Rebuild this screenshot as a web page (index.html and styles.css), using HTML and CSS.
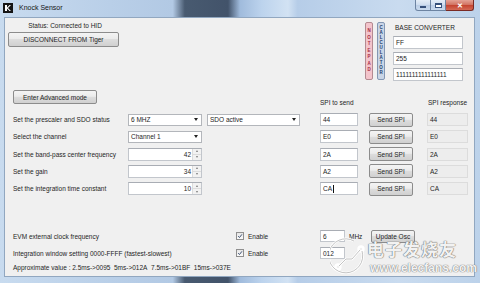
FILE: index.html
```html
<!DOCTYPE html>
<html lang="en">
<head>
    <meta charset="UTF-8">
    <meta name="viewport" content="width=device-width, initial-scale=1.0">
    <title>Knock Sensor</title>
    <link rel="stylesheet" href="styles.css">
</head>
<body>
    <div class="window">
        <div class="titlebar">
            <svg class="app-icon" viewBox="0 0 10 10">
                <rect width="10" height="10" fill="#151515"/>
                <path d="M2 2h2v2.5l2.5-2.5h1.5l-3 3 3 3h-1.5l-2.5-2.5v2.5h-2z" fill="#fff"/>
            </svg>
            <span class="title">Knock Sensor</span>
            <div class="caption-buttons">
                <span class="cap cap-min"><i></i></span>
                <span class="cap cap-max"><i></i></span>
                <span class="cap cap-close">✕</span>
            </div>
        </div>
        <div class="frame">
            <div class="client">
                <div class="top">
                    <div class="connection">
                        <div class="status">Status: Connected to HID</div>
                        <button class="btn disconnect">DISCONNECT FROM Tiger</button>
                    </div>
                    <div class="tools">
                        <button class="vbtn notepad">
                            <span>N</span><span>O</span><span>T</span><span>E</span><span>P</span><span>A</span><span>D</span>
                        </button>
                        <button class="vbtn calculator">
                            <span>C</span><span>A</span><span>L</span><span>C</span><span>U</span><span>L</span><span>A</span><span>T</span><span>O</span><span>R</span>
                        </button>
                        <div class="converter">
                            <div class="conv-title">BASE CONVERTER</div>
                            <div class="field">FF</div>
                            <div class="field">255</div>
                            <div class="field">1111111111111111</div>
                        </div>
                    </div>
                </div>

                <div class="spi-grid">
                    <button class="btn advanced">Enter Advanced mode</button>
                    <div class="col-head spi-head">SPI to send</div>
                    <div class="col-head resp-head">SPI response</div>

                    <div class="label">Set the prescaler and SDO status</div>
                    <div class="combo">6 MHZ<i class="arrow"></i></div>
                    <div class="combo wide">SDO active<i class="arrow"></i></div>
                    <div class="field spi">44</div>
                    <button class="btn send">Send SPI</button>
                    <div class="field response">44</div>

                    <div class="label">Select the channel</div>
                    <div class="combo">Channel 1<i class="arrow"></i></div>
                    <div class="field spi">E0</div>
                    <button class="btn send">Send SPI</button>
                    <div class="field response">E0</div>

                    <div class="label">Set the band-pass center frequency</div>
                    <div class="spin"><span class="val">42</span><span class="spin-btns"><i class="up"></i><i class="down"></i></span></div>
                    <div class="field spi">2A</div>
                    <button class="btn send">Send SPI</button>
                    <div class="field response">2A</div>

                    <div class="label">Set the gain</div>
                    <div class="spin"><span class="val">34</span><span class="spin-btns"><i class="up"></i><i class="down"></i></span></div>
                    <div class="field spi">A2</div>
                    <button class="btn send">Send SPI</button>
                    <div class="field response">A2</div>

                    <div class="label">Set the integration time constant</div>
                    <div class="spin"><span class="val">10</span><span class="spin-btns"><i class="up"></i><i class="down"></i></span></div>
                    <div class="field spi">CA<span class="caret"></span></div>
                    <button class="btn send">Send SPI</button>
                    <div class="field response">CA</div>
                </div>

                <div class="bottom-grid">
                    <div class="label">EVM external clock frequency</div>
                    <label class="enable"><span class="check"><svg viewBox="0 0 8 8"><path d="M1.5 4.2l1.8 1.8 3.3-4.2" fill="none" stroke="#2b3f66" stroke-width="1.2"/></svg></span>Enable</label>
                    <div class="field small">6</div>
                    <div class="unit">MHz</div>
                    <button class="btn update">Update Osc</button>

                    <div class="label">Integration window setting 0000-FFFF (fastest-slowest)</div>
                    <label class="enable"><span class="check"><svg viewBox="0 0 8 8"><path d="M1.5 4.2l1.8 1.8 3.3-4.2" fill="none" stroke="#2b3f66" stroke-width="1.2"/></svg></span>Enable</label>
                    <div class="field small">012</div>

                    <div class="approx">Approximate value : 2.5ms-&gt;0095&nbsp; 5ms-&gt;012A&nbsp; 7.5ms-&gt;01BF&nbsp; 15ms-&gt;037E</div>
                </div>
            </div>
        </div>

        <div class="watermark">
            <svg class="wm-logo" viewBox="0 0 36 46">
                <g fill="none" stroke="#fff" stroke-width="2.4">
                    <path d="M24 5a17 17 0 1 0 8 10"/>
                    <path d="M9 30l7-7 6 0 8-9"/>
                    <circle cx="8" cy="31" r="2.5"/>
                    <circle cx="31" cy="13" r="2.5"/>
                </g>
                <g fill="none" stroke="#9a9a9a" stroke-width="0.6">
                    <path d="M24 5a17 17 0 1 0 8 10"/>
                    <path d="M9 30l7-7 6 0 8-9"/>
                </g>
            </svg>
            <div class="wm-name">电子发烧友</div>
            <div class="wm-url">www.elecfans.com</div>
        </div>
    </div>
</body>
</html>
```

FILE: styles.css
```css
* {
    box-sizing: border-box;
}

body {
    margin: 0;
    font-family: "Liberation Sans", Arial, sans-serif;
    font-size: 6.5px;
    color: #1e1e1e;
}

/* the aero glass lets the desktop show through: a dark patch near the middle */
.window {
    width: 480px;
    height: 283px;
    position: relative;
    overflow: hidden;
    display: flex;
    flex-direction: column;
    background-color: #bcd2ea;
    background-image: linear-gradient(to right, #c8dbef 0%, #b9cfe8 23%, #b2c9e4 36%, #485a70 38.5%,
        #42536a 47.5%, #a0bbdc 50%, #bcd3ed 54.5%, #d2e2f3 60%, #b6cde8 62%, #c9dbef 83%, #bcd2ea 100%);
}

/* title bar */
.titlebar {
    height: 17px;
    display: flex;
    align-items: flex-start;
}

.app-icon {
    width: 10px;
    height: 10px;
    margin: 3px 0 0 3px;
}

.title {
    margin: 4px 0 0 6px;
    font-size: 7px;
    line-height: 8px;
    color: #151515;
}

.caption-buttons {
    display: flex;
    margin-left: auto;
    margin-right: 6px;
}

.cap {
    height: 11px;
    display: flex;
    align-items: center;
    justify-content: center;
    border: 1px solid #6d84a2;
    border-top: none;
    background: linear-gradient(#e4edf7, #cddcee 50%, #bacde5 50%, #c9daee);
}

.cap-min {
    width: 16px;
    border-radius: 0 0 0 3px;
}

.cap-min i {
    width: 6px;
    height: 2px;
    margin-top: 3px;
    background: #fff;
    border: 1px solid #35507a;
}

.cap-max {
    width: 15px;
    border-left: none;
}

.cap-max i {
    width: 7px;
    height: 5px;
    border: 1px solid #35507a;
    border-top-width: 2px;
    background: #fff;
}

.cap-close {
    width: 28px;
    border-left: none;
    border-color: #7a2a24;
    border-radius: 0 0 3px 0;
    background: linear-gradient(#e4a295, #d0705f 50%, #c3412d 50%, #d46a56);
    color: #fff;
    font-size: 7px;
    font-weight: bold;
    line-height: 1;
}

/* client area */
.frame {
    flex: 1;
    display: flex;
    padding: 0 5px 6px 4px;
}

.client {
    flex: 1;
    display: flex;
    flex-direction: column;
    background: #f0f0f0;
    border: 1px solid #91a7c0;
}

.field {
    height: 13px;
    display: flex;
    align-items: center;
    padding-left: 2px;
    background: #fff;
    border: 1px solid #c2c6cc;
    border-top-color: #a9adb4;
}

.btn {
    font: inherit;
    color: #1e1e1e;
    padding: 0;
    height: 14px;
    border: 1px solid #8c8c8c;
    border-radius: 2px;
    background: linear-gradient(#f4f4f4, #ebebeb 45%, #dddddd 50%, #d0d0d0);
}

.top {
    display: flex;
    align-items: flex-start;
    padding-right: 11px;
}

.connection {
    width: 111px;
    margin: 3px 0 0 3px;
    display: flex;
    flex-direction: column;
    align-items: center;
    gap: 2px;
}

.status {
    line-height: 9px;
    padding-left: 3px;
}

.disconnect {
    width: 111px;
    height: 15px;
}

.tools {
    margin: 4px 0 0 auto;
    display: flex;
    align-items: flex-start;
}

.vbtn {
    width: 8px;
    height: 58px;
    padding: 3px 0;
    display: flex;
    flex-direction: column;
    align-items: center;
    justify-content: space-between;
    font-family: "Liberation Sans", Arial, sans-serif;
    font-size: 4.5px;
    font-weight: bold;
    line-height: 1;
    border-radius: 2px;
}

.notepad {
    padding: 6px 0;
    background: #f3c4cb;
    border: 1px solid #b48a91;
    color: #a3283d;
}

.calculator {
    margin-left: 4px;
    background: #c9d5e6;
    border: 1px solid #8497b3;
    color: #233c6b;
}

.converter {
    width: 70px;
    margin-left: 8px;
    display: flex;
    flex-direction: column;
    gap: 3px;
}

.conv-title {
    line-height: 8px;
    margin: 2px 0 1px 2px;
}

/* SPI grid */
.spi-grid {
    display: grid;
    grid-template-columns: 115px 79px 113px 49px 58px 1fr;
    grid-template-rows: 21px repeat(5, 17.25px);
    margin-top: 9px;
    padding-left: 8px;
    align-items: center;
}

.advanced {
    grid-column: 1 / 3;
    align-self: start;
    width: 84px;
}

.col-head {
    align-self: end;
    margin-bottom: 4px;
    line-height: 8px;
}

.spi-head {
    grid-column: 4;
}

.resp-head {
    grid-column: 6;
    padding-left: 1px;
}

.label {
    grid-column: 1;
    line-height: 9px;
    white-space: nowrap;
}

.combo {
    grid-column: 2;
    width: 74px;
    height: 12px;
    display: flex;
    align-items: center;
    padding-left: 2px;
    background: #fff;
    border: 1px solid #b3b6bb;
}

.combo.wide {
    grid-column: 3;
    width: 93px;
}

.arrow {
    margin: 0 3px 0 auto;
    border-left: 2px solid transparent;
    border-right: 2px solid transparent;
    border-top: 3px solid #222;
}

.spin {
    grid-column: 2;
    width: 74px;
    height: 13px;
    display: flex;
    background: #fff;
    border: 1px solid #c2c6cc;
    border-top-color: #a9adb4;
}

.spin .val {
    flex: 1;
    text-align: right;
    padding-right: 1px;
    line-height: 11px;
}

.spin-btns {
    width: 9px;
    display: flex;
    flex-direction: column;
    border-left: 1px solid #dcdcdc;
    background: #f2f2f2;
}

.spin-btns i {
    flex: 1;
    display: flex;
    align-items: center;
    justify-content: center;
}

.spin-btns i::before {
    content: "";
    border-left: 1.5px solid transparent;
    border-right: 1.5px solid transparent;
}

.spin-btns .up {
    border-bottom: 1px solid #dcdcdc;
}

.spin-btns .up::before {
    border-bottom: 2px solid #7a7a7a;
}

.spin-btns .down::before {
    border-top: 2px solid #7a7a7a;
}

.spi {
    grid-column: 4;
    width: 38px;
}

.caret {
    width: 1px;
    height: 8px;
    margin-left: 1px;
    background: #111;
}

.send {
    grid-column: 5;
    width: 44px;
}

.response {
    grid-column: 6;
    width: 41px;
    background: #ededed;
    border-color: #dcdcdc;
}

/* bottom controls */
.bottom-grid {
    display: grid;
    grid-template-columns: 223px 84px 28px 23px 1fr;
    grid-template-rows: 14px 14px 9px;
    row-gap: 3px;
    margin-top: 32px;
    padding-left: 8px;
    align-items: center;
}

.enable {
    grid-column: 2;
    display: flex;
    align-items: center;
    gap: 4px;
}

.check {
    width: 8px;
    height: 8px;
    display: flex;
    border: 1px solid #8f8f8f;
    background: linear-gradient(#e6e6e6, #fafafa);
}

.check svg {
    width: 100%;
    height: 100%;
}

.field.small {
    grid-column: 3;
    width: 25px;
    height: 12px;
}

.unit {
    grid-column: 4;
    padding-left: 1px;
}

.update {
    grid-column: 5;
    width: 44px;
    height: 13px;
}

.approx {
    grid-column: 1 / -1;
    line-height: 9px;
    white-space: nowrap;
}

/* watermark laid over the form */
.watermark {
    position: absolute;
    left: 330px;
    top: 236px;
    pointer-events: none;
}

.wm-logo {
    width: 36px;
    height: 46px;
}

.wm-name {
    position: absolute;
    left: 37px;
    top: 3px;
    font-family: "Noto Sans CJK SC", sans-serif;
    font-size: 17px;
    font-weight: bold;
    line-height: 20px;
    letter-spacing: 1px;
    white-space: nowrap;
    color: rgba(255, 255, 255, 0.92);
    text-shadow: 0 0 1px #777, 0 0 1px #777, 0 0 1px #888;
}

.wm-url {
    position: absolute;
    left: 40px;
    top: 26px;
    font-size: 12px;
    font-weight: bold;
    line-height: 12px;
    white-space: nowrap;
    color: rgba(255, 255, 255, 0.92);
    text-shadow: 0 0 1px #777, 0 0 1px #777;
}
```
